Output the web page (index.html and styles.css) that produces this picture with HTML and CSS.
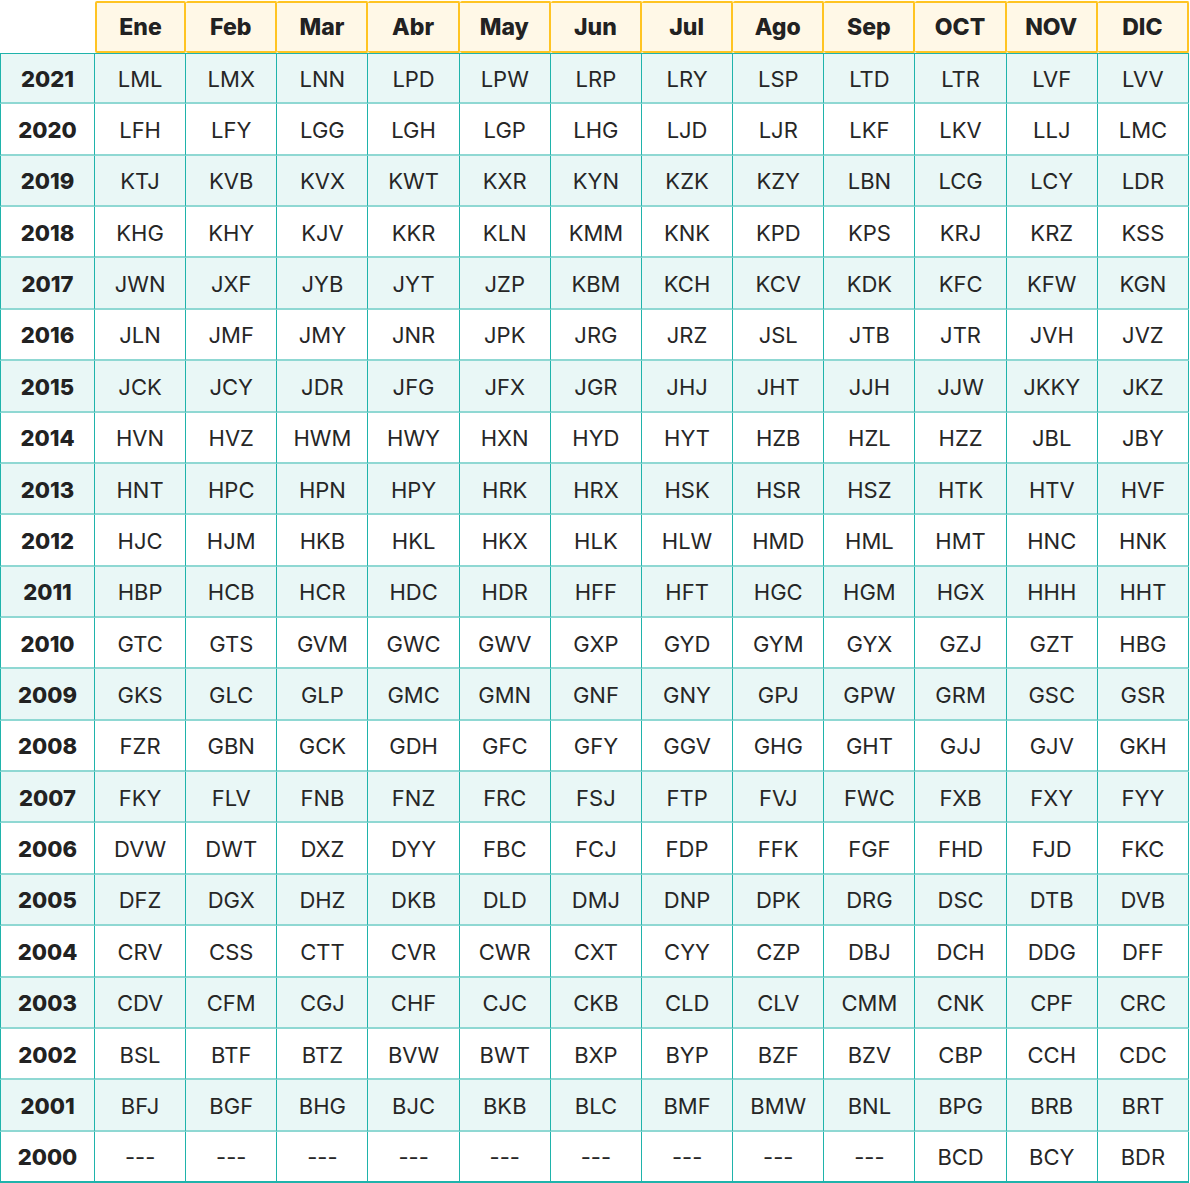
FILE: index.html
```html
<!DOCTYPE html>
<html lang="es">
<head>
<meta charset="utf-8">
<title>Códigos</title>
<link rel="stylesheet" href="styles.css">
</head>
<body>
<div class="grid">
  <div class="corner"></div>
  <div class="hd first">Ene</div><div class="hd">Feb</div><div class="hd">Mar</div><div class="hd">Abr</div><div class="hd">May</div><div class="hd">Jun</div><div class="hd">Jul</div><div class="hd">Ago</div><div class="hd">Sep</div><div class="hd">OCT</div><div class="hd">NOV</div><div class="hd">DIC</div>

  <div class="yr alt">2021</div><div class="c alt">LML</div><div class="c alt">LMX</div><div class="c alt">LNN</div><div class="c alt">LPD</div><div class="c alt">LPW</div><div class="c alt">LRP</div><div class="c alt">LRY</div><div class="c alt">LSP</div><div class="c alt">LTD</div><div class="c alt">LTR</div><div class="c alt">LVF</div><div class="c alt">LVV</div>
  <div class="yr">2020</div><div class="c">LFH</div><div class="c">LFY</div><div class="c">LGG</div><div class="c">LGH</div><div class="c">LGP</div><div class="c">LHG</div><div class="c">LJD</div><div class="c">LJR</div><div class="c">LKF</div><div class="c">LKV</div><div class="c">LLJ</div><div class="c">LMC</div>
  <div class="yr alt">2019</div><div class="c alt">KTJ</div><div class="c alt">KVB</div><div class="c alt">KVX</div><div class="c alt">KWT</div><div class="c alt">KXR</div><div class="c alt">KYN</div><div class="c alt">KZK</div><div class="c alt">KZY</div><div class="c alt">LBN</div><div class="c alt">LCG</div><div class="c alt">LCY</div><div class="c alt">LDR</div>
  <div class="yr">2018</div><div class="c">KHG</div><div class="c">KHY</div><div class="c">KJV</div><div class="c">KKR</div><div class="c">KLN</div><div class="c">KMM</div><div class="c">KNK</div><div class="c">KPD</div><div class="c">KPS</div><div class="c">KRJ</div><div class="c">KRZ</div><div class="c">KSS</div>
  <div class="yr alt">2017</div><div class="c alt">JWN</div><div class="c alt">JXF</div><div class="c alt">JYB</div><div class="c alt">JYT</div><div class="c alt">JZP</div><div class="c alt">KBM</div><div class="c alt">KCH</div><div class="c alt">KCV</div><div class="c alt">KDK</div><div class="c alt">KFC</div><div class="c alt">KFW</div><div class="c alt">KGN</div>
  <div class="yr">2016</div><div class="c">JLN</div><div class="c">JMF</div><div class="c">JMY</div><div class="c">JNR</div><div class="c">JPK</div><div class="c">JRG</div><div class="c">JRZ</div><div class="c">JSL</div><div class="c">JTB</div><div class="c">JTR</div><div class="c">JVH</div><div class="c">JVZ</div>
  <div class="yr alt">2015</div><div class="c alt">JCK</div><div class="c alt">JCY</div><div class="c alt">JDR</div><div class="c alt">JFG</div><div class="c alt">JFX</div><div class="c alt">JGR</div><div class="c alt">JHJ</div><div class="c alt">JHT</div><div class="c alt">JJH</div><div class="c alt">JJW</div><div class="c alt">JKKY</div><div class="c alt">JKZ</div>
  <div class="yr">2014</div><div class="c">HVN</div><div class="c">HVZ</div><div class="c">HWM</div><div class="c">HWY</div><div class="c">HXN</div><div class="c">HYD</div><div class="c">HYT</div><div class="c">HZB</div><div class="c">HZL</div><div class="c">HZZ</div><div class="c">JBL</div><div class="c">JBY</div>
  <div class="yr alt">2013</div><div class="c alt">HNT</div><div class="c alt">HPC</div><div class="c alt">HPN</div><div class="c alt">HPY</div><div class="c alt">HRK</div><div class="c alt">HRX</div><div class="c alt">HSK</div><div class="c alt">HSR</div><div class="c alt">HSZ</div><div class="c alt">HTK</div><div class="c alt">HTV</div><div class="c alt">HVF</div>
  <div class="yr">2012</div><div class="c">HJC</div><div class="c">HJM</div><div class="c">HKB</div><div class="c">HKL</div><div class="c">HKX</div><div class="c">HLK</div><div class="c">HLW</div><div class="c">HMD</div><div class="c">HML</div><div class="c">HMT</div><div class="c">HNC</div><div class="c">HNK</div>
  <div class="yr alt">2011</div><div class="c alt">HBP</div><div class="c alt">HCB</div><div class="c alt">HCR</div><div class="c alt">HDC</div><div class="c alt">HDR</div><div class="c alt">HFF</div><div class="c alt">HFT</div><div class="c alt">HGC</div><div class="c alt">HGM</div><div class="c alt">HGX</div><div class="c alt">HHH</div><div class="c alt">HHT</div>
  <div class="yr">2010</div><div class="c">GTC</div><div class="c">GTS</div><div class="c">GVM</div><div class="c">GWC</div><div class="c">GWV</div><div class="c">GXP</div><div class="c">GYD</div><div class="c">GYM</div><div class="c">GYX</div><div class="c">GZJ</div><div class="c">GZT</div><div class="c">HBG</div>
  <div class="yr alt">2009</div><div class="c alt">GKS</div><div class="c alt">GLC</div><div class="c alt">GLP</div><div class="c alt">GMC</div><div class="c alt">GMN</div><div class="c alt">GNF</div><div class="c alt">GNY</div><div class="c alt">GPJ</div><div class="c alt">GPW</div><div class="c alt">GRM</div><div class="c alt">GSC</div><div class="c alt">GSR</div>
  <div class="yr">2008</div><div class="c">FZR</div><div class="c">GBN</div><div class="c">GCK</div><div class="c">GDH</div><div class="c">GFC</div><div class="c">GFY</div><div class="c">GGV</div><div class="c">GHG</div><div class="c">GHT</div><div class="c">GJJ</div><div class="c">GJV</div><div class="c">GKH</div>
  <div class="yr alt">2007</div><div class="c alt">FKY</div><div class="c alt">FLV</div><div class="c alt">FNB</div><div class="c alt">FNZ</div><div class="c alt">FRC</div><div class="c alt">FSJ</div><div class="c alt">FTP</div><div class="c alt">FVJ</div><div class="c alt">FWC</div><div class="c alt">FXB</div><div class="c alt">FXY</div><div class="c alt">FYY</div>
  <div class="yr">2006</div><div class="c">DVW</div><div class="c">DWT</div><div class="c">DXZ</div><div class="c">DYY</div><div class="c">FBC</div><div class="c">FCJ</div><div class="c">FDP</div><div class="c">FFK</div><div class="c">FGF</div><div class="c">FHD</div><div class="c">FJD</div><div class="c">FKC</div>
  <div class="yr alt">2005</div><div class="c alt">DFZ</div><div class="c alt">DGX</div><div class="c alt">DHZ</div><div class="c alt">DKB</div><div class="c alt">DLD</div><div class="c alt">DMJ</div><div class="c alt">DNP</div><div class="c alt">DPK</div><div class="c alt">DRG</div><div class="c alt">DSC</div><div class="c alt">DTB</div><div class="c alt">DVB</div>
  <div class="yr">2004</div><div class="c">CRV</div><div class="c">CSS</div><div class="c">CTT</div><div class="c">CVR</div><div class="c">CWR</div><div class="c">CXT</div><div class="c">CYY</div><div class="c">CZP</div><div class="c">DBJ</div><div class="c">DCH</div><div class="c">DDG</div><div class="c">DFF</div>
  <div class="yr alt">2003</div><div class="c alt">CDV</div><div class="c alt">CFM</div><div class="c alt">CGJ</div><div class="c alt">CHF</div><div class="c alt">CJC</div><div class="c alt">CKB</div><div class="c alt">CLD</div><div class="c alt">CLV</div><div class="c alt">CMM</div><div class="c alt">CNK</div><div class="c alt">CPF</div><div class="c alt">CRC</div>
  <div class="yr">2002</div><div class="c">BSL</div><div class="c">BTF</div><div class="c">BTZ</div><div class="c">BVW</div><div class="c">BWT</div><div class="c">BXP</div><div class="c">BYP</div><div class="c">BZF</div><div class="c">BZV</div><div class="c">CBP</div><div class="c">CCH</div><div class="c">CDC</div>
  <div class="yr alt">2001</div><div class="c alt">BFJ</div><div class="c alt">BGF</div><div class="c alt">BHG</div><div class="c alt">BJC</div><div class="c alt">BKB</div><div class="c alt">BLC</div><div class="c alt">BMF</div><div class="c alt">BMW</div><div class="c alt">BNL</div><div class="c alt">BPG</div><div class="c alt">BRB</div><div class="c alt">BRT</div>
  <div class="yr last">2000</div><div class="c last">---</div><div class="c last">---</div><div class="c last">---</div><div class="c last">---</div><div class="c last">---</div><div class="c last">---</div><div class="c last">---</div><div class="c last">---</div><div class="c last">---</div><div class="c last">BCD</div><div class="c last">BCY</div><div class="c last">BDR</div>
</div>
</body>
</html>
```

FILE: styles.css
```css
* { box-sizing: border-box; }
html, body { margin: 0; padding: 0; background: #ffffff; }
body {
  font-family: "Inter", "Noto Sans", sans-serif;
  color: #222222;
}
.grid {
  display: grid;
  width: 1189px;
  height: 1183px;
  padding-top: 1px;
  grid-template-columns: 95px repeat(12, 1fr);
  grid-template-rows: 52px repeat(22, 1fr);
}
.corner { background: #ffffff; }
.hd {
  display: flex;
  align-items: center;
  justify-content: center;
  background: #fff8e7;
  border-top: 2px solid #ffc423;
  border-bottom: 2px solid #ffc423;
  border-right: 2px solid #ffc423;
  font-size: 23px;
  font-weight: 800;
  color: #222222;
  border-radius: 2px;
}
.hd.first { border-left: 2px solid #ffc423; }
.yr, .c {
  display: flex;
  align-items: center;
  justify-content: center;
  padding-top: 2px;
  background: #ffffff;
  border-right: 1px solid #1fb3ab;
  border-bottom: 2px solid #8fd8d3;
}
.yr {
  border-left: 1px solid #1fb3ab;
  font-size: 22px;
  font-weight: 800;
}
.c {
  font-size: 22px;
  font-weight: 400;
  color: #262626;
}
.alt { background: #e9f7f6; }
.yr.last, .c.last { border-bottom: 2px solid #1fb3ab; }
.grid > .yr:nth-child(14), .grid > .c:nth-child(-n+26):nth-child(n+15) { border-top: 1px solid #1fb3ab; }
```
